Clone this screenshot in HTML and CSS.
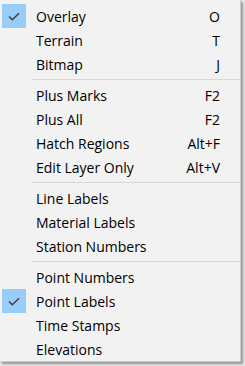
FILE: index.html
```html
<!DOCTYPE html>
<html lang="en">
<head>
    <meta charset="UTF-8">
    <title>View Menu</title>
    <link rel="stylesheet" href="styles.css">
</head>
<body>

    <div class="menu">
        <div class="item checked"><span class="check"><svg width="12" height="9" viewBox="0 0 12 9"><path d="M1 4.5 L4.3 7.8 L11 1.2" fill="none" stroke="#3b3b3b" stroke-width="1.4"/></svg></span><span class="label">Overlay</span><span class="key">O</span></div>
        <div class="item"><span class="check"></span><span class="label">Terrain</span><span class="key">T</span></div>
        <div class="item"><span class="check"></span><span class="label">Bitmap</span><span class="key">J</span></div>
        <div class="sep"></div>
        <div class="item"><span class="check"></span><span class="label">Plus Marks</span><span class="key">F2</span></div>
        <div class="item"><span class="check"></span><span class="label">Plus All</span><span class="key">F2</span></div>
        <div class="item"><span class="check"></span><span class="label">Hatch Regions</span><span class="key">Alt+F</span></div>
        <div class="item"><span class="check"></span><span class="label">Edit Layer Only</span><span class="key">Alt+V</span></div>
        <div class="sep"></div>
        <div class="item"><span class="check"></span><span class="label">Line Labels</span><span class="key"></span></div>
        <div class="item"><span class="check"></span><span class="label">Material Labels</span><span class="key"></span></div>
        <div class="item"><span class="check"></span><span class="label">Station Numbers</span><span class="key"></span></div>
        <div class="sep"></div>
        <div class="item"><span class="check"></span><span class="label">Point Numbers</span><span class="key"></span></div>
        <div class="item checked"><span class="check"><svg width="12" height="9" viewBox="0 0 12 9"><path d="M1 4.5 L4.3 7.8 L11 1.2" fill="none" stroke="#3b3b3b" stroke-width="1.4"/></svg></span><span class="label">Point Labels</span><span class="key"></span></div>
        <div class="item"><span class="check"></span><span class="label">Time Stamps</span><span class="key"></span></div>
        <div class="item"><span class="check"></span><span class="label">Elevations</span><span class="key"></span></div>
    </div>

</body>
</html>
```

FILE: styles.css
```css
html, body {
    margin: 0;
    height: 100%;
}
body {
    background-color: #e6e6e6;
    font-family: "Open Sans", "Noto Sans", sans-serif;
    font-size: 14px;
    color: #000000;
    overflow: hidden;
}
.menu {
    width: 241px;
    box-sizing: border-box;
    background-color: #f2f2f2;
    border-right: 1px solid #cccccc;
    border-bottom: 1px solid #cccccc;
    padding-top: 4px;
    box-shadow: 2px 2px 2px rgba(0, 0, 0, 0.35);
}
.item {
    display: flex;
    align-items: center;
    height: 24px;
    padding-right: 20px;
}
.check {
    width: 24px;
    height: 24px;
    margin: 0 10px 0 2px;
    display: flex;
    align-items: center;
    justify-content: center;
}
.checked .check {
    background-color: #99ccf6;
}
.label {
    flex: 1;
    padding-top: 1px;
}
.key {
    text-align: right;
    padding-top: 1px;
}
.sep {
    height: 1px;
    background-color: #d7d7d7;
    margin: 3px 0 3px 32px;
}
```
